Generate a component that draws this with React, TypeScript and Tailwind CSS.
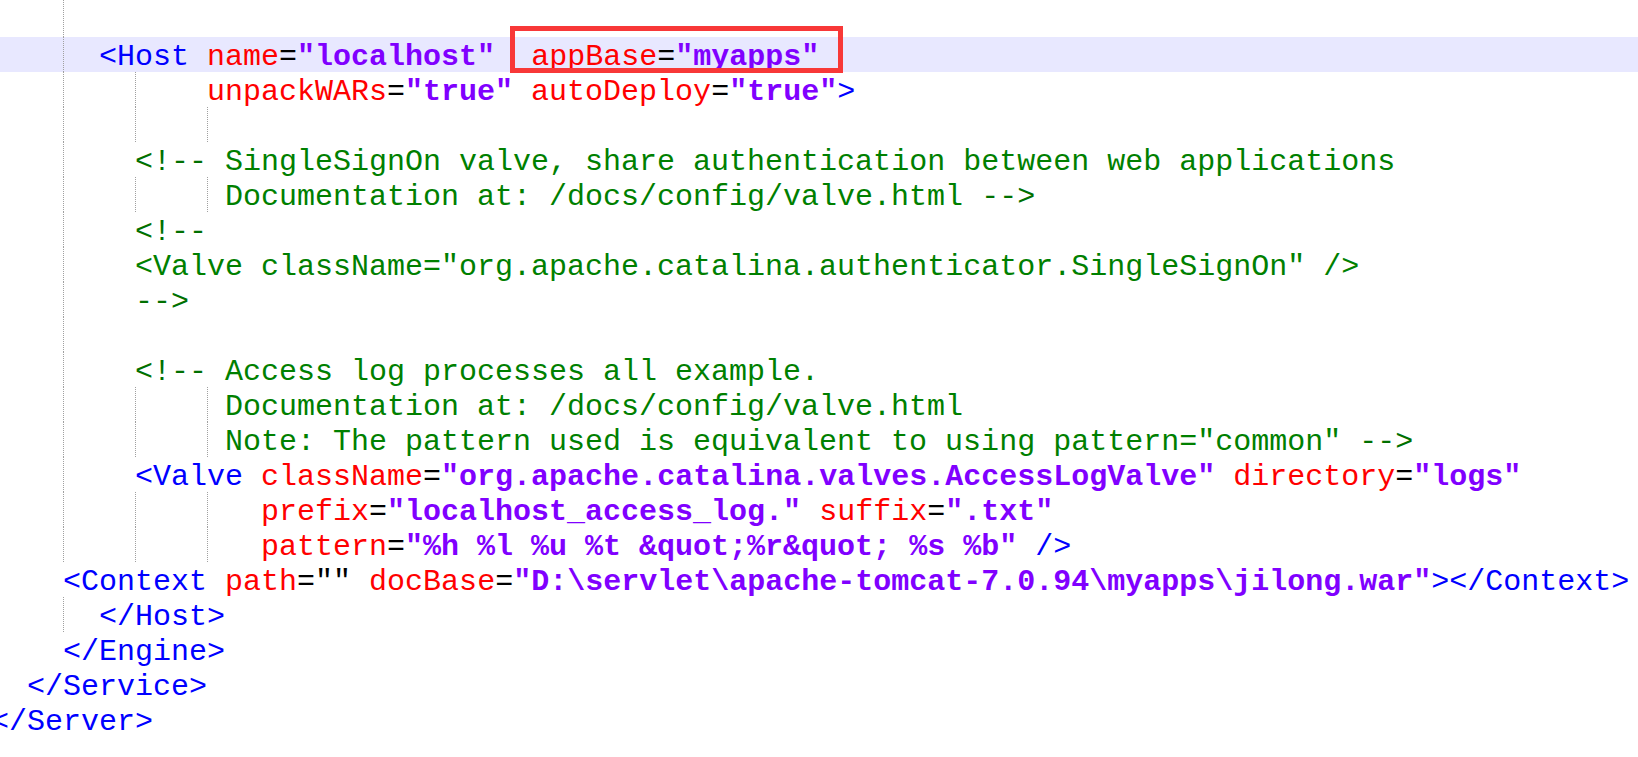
type Kind = 't' | 'a' | 'e' | 'v' | 'c' | 'm' | 'p';
type Token = [Kind, string];

interface Line {
  indent: number;
  guides: number[];
  tokens: Token[];
  height?: string;
  active?: boolean;
}

const colors: Record<Kind, string> = {
  t: 'text-[#0000ff]',
  a: 'text-[#ff0000]',
  e: 'text-black',
  v: 'text-[#8000ff] font-bold',
  c: 'text-[#008000]',
  m: 'text-[#007000]',
  p: 'text-black',
};

const lines: Line[] = [
  { indent: 5, guides: [4], tokens: [], height: 'h-[37px]' },
  {
    indent: 6,
    guides: [4],
    active: true,
    tokens: [
      ['t', '<Host'], ['p', ' '], ['a', 'name'], ['e', '='], ['v', '"localhost"'], ['p', '  '],
      ['a', 'appBase'], ['e', '='], ['v', '"myapps"'],
    ],
  },
  {
    indent: 12,
    guides: [4, 8],
    tokens: [
      ['a', 'unpackWARs'], ['e', '='], ['v', '"true"'], ['p', ' '],
      ['a', 'autoDeploy'], ['e', '='], ['v', '"true"'], ['t', '>'],
    ],
  },
  { indent: 13, guides: [4, 8, 12], tokens: [] },
  {
    indent: 8,
    guides: [4],
    tokens: [['m', '<!--'], ['c', ' SingleSignOn valve, share authentication between web applications']],
  },
  {
    indent: 13,
    guides: [4, 8, 12],
    tokens: [['c', 'Documentation at: /docs/config/valve.html '], ['m', '-->']],
  },
  { indent: 8, guides: [4], tokens: [['m', '<!--']] },
  {
    indent: 8,
    guides: [4],
    tokens: [['c', '<Valve className="org.apache.catalina.authenticator.SingleSignOn" />']],
  },
  { indent: 8, guides: [4], tokens: [['m', '-->']] },
  { indent: 5, guides: [4], tokens: [] },
  {
    indent: 8,
    guides: [4],
    tokens: [['m', '<!--'], ['c', ' Access log processes all example.']],
  },
  {
    indent: 13,
    guides: [4, 8, 12],
    tokens: [['c', 'Documentation at: /docs/config/valve.html']],
  },
  {
    indent: 13,
    guides: [4, 8, 12],
    tokens: [['c', 'Note: The pattern used is equivalent to using pattern="common" '], ['m', '-->']],
  },
  {
    indent: 8,
    guides: [4],
    tokens: [
      ['t', '<Valve'], ['p', ' '], ['a', 'className'], ['e', '='],
      ['v', '"org.apache.catalina.valves.AccessLogValve"'], ['p', ' '],
      ['a', 'directory'], ['e', '='], ['v', '"logs"'],
    ],
  },
  {
    indent: 15,
    guides: [4, 8, 12],
    tokens: [
      ['a', 'prefix'], ['e', '='], ['v', '"localhost_access_log."'], ['p', ' '],
      ['a', 'suffix'], ['e', '='], ['v', '".txt"'],
    ],
  },
  {
    indent: 15,
    guides: [4, 8, 12],
    tokens: [
      ['a', 'pattern'], ['e', '='], ['v', '"%h %l %u %t &quot;%r&quot; %s %b"'], ['p', ' '], ['t', '/>'],
    ],
  },
  {
    indent: 4,
    guides: [],
    tokens: [
      ['t', '<Context'], ['p', ' '], ['a', 'path'], ['e', '='], ['p', '""'], ['p', ' '],
      ['a', 'docBase'], ['e', '='],
      ['v', '"D:\\servlet\\apache-tomcat-7.0.94\\myapps\\jilong.war"'], ['t', '></Context>'],
    ],
  },
  { indent: 6, guides: [4], tokens: [['t', '</Host>']] },
  { indent: 4, guides: [], tokens: [['t', '</Engine>']] },
  { indent: 2, guides: [], tokens: [['t', '</Service>']] },
  { indent: 0, guides: [], tokens: [['t', '</Server>']] },
];

const CH = 18;

// splits the leading whitespace so each indent guide sits on a segment's left edge
function IndentCells({ indent, guides }: { indent: number; guides: number[] }) {
  const stops = [0, ...guides.filter((g) => g < indent), indent];
  const cells = [];
  for (let i = 0; i < stops.length - 1; i++) {
    const w = (stops[i + 1] - stops[i]) * CH;
    if (w <= 0) continue;
    cells.push(
      <span
        key={i}
        className={
          i === 0
            ? 'block h-full shrink-0'
            : 'block h-full shrink-0 border-l border-dotted border-[#a0a0a0]'
        }
        style={{ width: w }}
      />
    );
  }
  return <>{cells}</>;
}

function CodeLine({ line }: { line: Line }) {
  return (
    <div
      className={`flex ${line.height ?? 'h-[35px]'} ${line.active ? 'bg-[#e8e8ff]' : ''}`}
    >
      <IndentCells indent={line.indent} guides={line.guides} />
      <span className="whitespace-pre shrink-0 pt-[3px]">
        {line.tokens.map(([kind, text], i) => (
          <span key={i} className={colors[kind]}>
            {text}
          </span>
        ))}
      </span>
    </div>
  );
}

export default function App() {
  return (
    <div className="relative w-[1638px] h-[757px] overflow-hidden bg-white">
      <div className="ml-[-9px] font-['Liberation_Mono','Courier_New',monospace] text-[30px] leading-[35px] text-black">
        {lines.map((line, i) => (
          <CodeLine key={i} line={line} />
        ))}
      </div>

      {/* red annotation box around appBase */}
      <div className="absolute left-[510px] top-[26px] w-[333px] h-[47px] border-[5px] border-[#f83838]" />
    </div>
  );
}
